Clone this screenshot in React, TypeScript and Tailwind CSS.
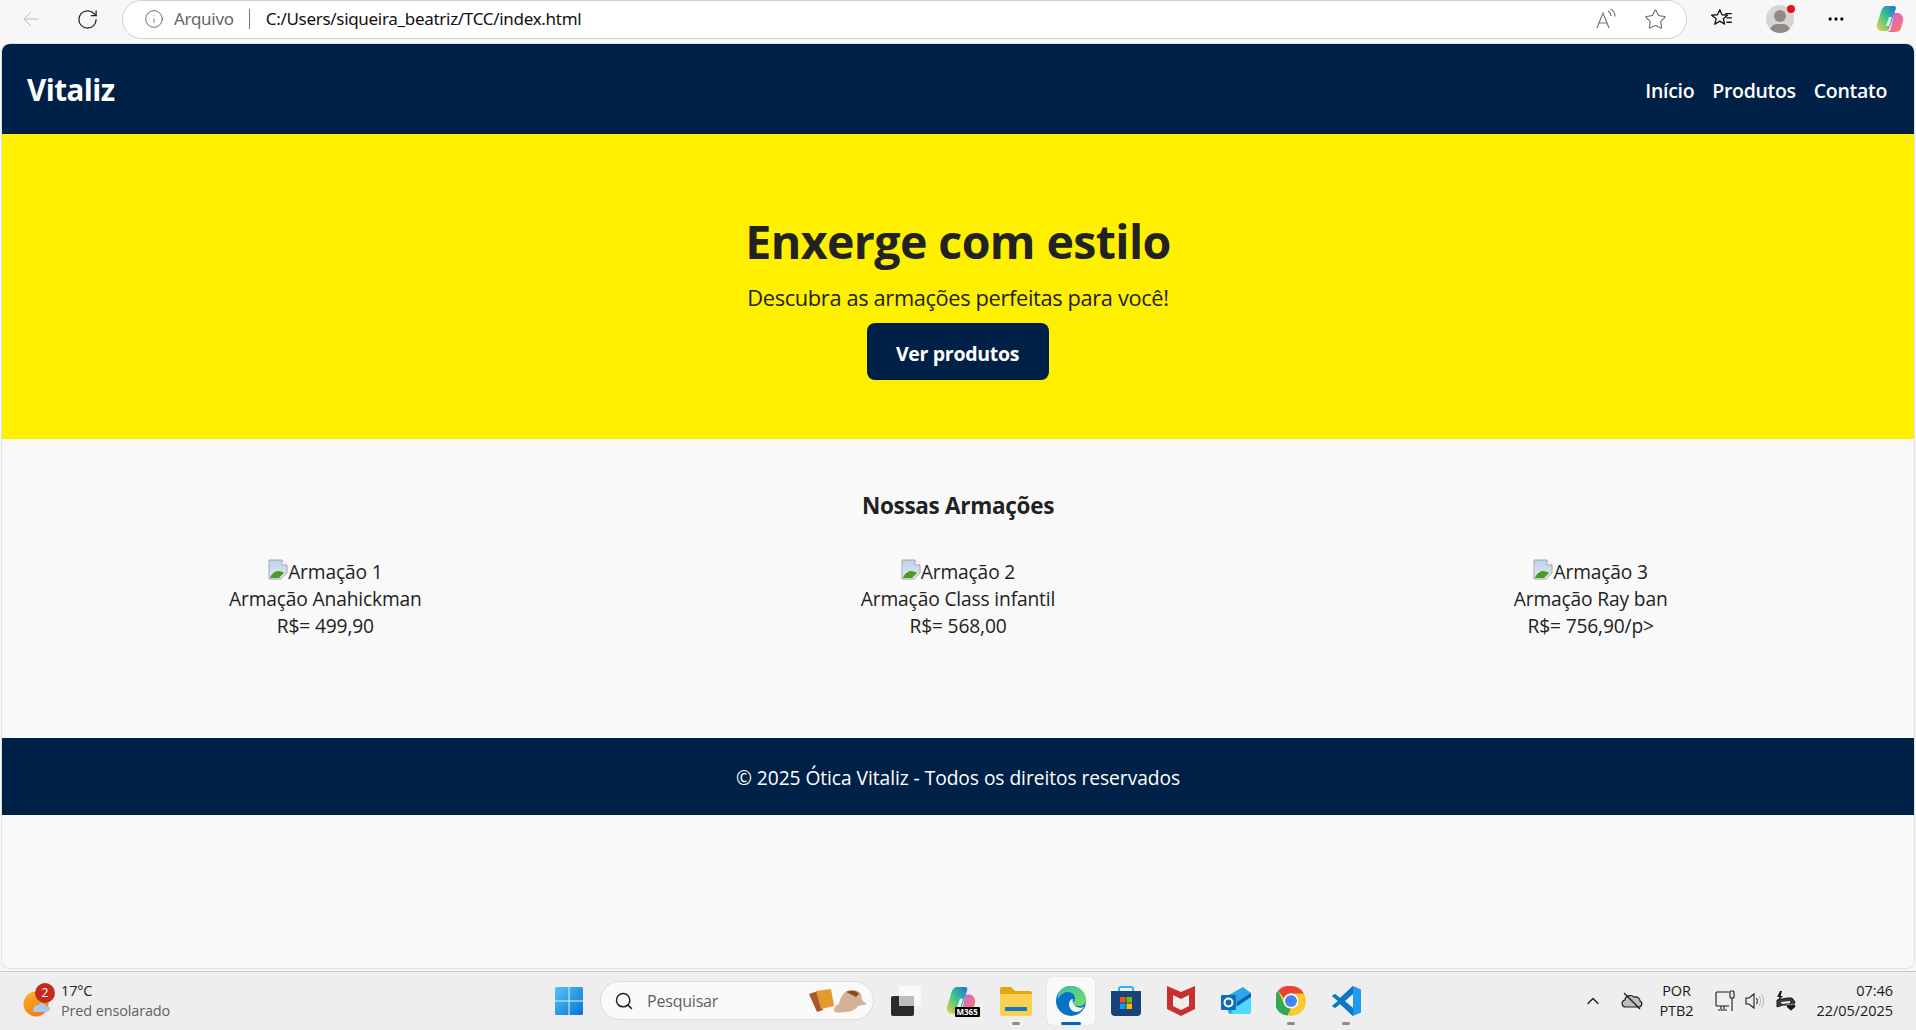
import React from 'react';
import { ArrowLeft, RotateCw, Info, Star, Search, ChevronUp, MoreHorizontal } from 'lucide-react';

const produtos = [
  { alt: 'Armação 1', nome: 'Armação Anahickman', preco: 'R$= 499,90' },
  { alt: 'Armação 2', nome: 'Armação Class infantil', preco: 'R$= 568,00' },
  { alt: 'Armação 3', nome: 'Armação Ray ban', preco: 'R$= 756,90/p>' },
];

const BrokenImage = () => (
  <svg width="20" height="21" viewBox="0 0 20 21" className="inline-block align-[-1px]">
    <defs>
      <linearGradient id="sky" x1="0" y1="0" x2="0" y2="1">
        <stop offset="0" stopColor="#bcd2ec" />
        <stop offset="1" stopColor="#e3ebf4" />
      </linearGradient>
    </defs>
    <path d="M1 1h13l5 5v8l-6 6H1z" fill="url(#sky)" stroke="#a6a6a6" />
    <path d="M14 1v5h5" fill="#fff" stroke="#a6a6a6" />
    <path d="M2 19c1-4 5-7 8-7s5 1 6 2l-5 5z" fill="#4f9a26" />
    <path d="M19.500 14l-6.500 6.500h2l4.500-4.500z" fill="#f9f9f9" />
  </svg>
);

const CopilotIcon = ({ size = 28 }: { size?: number }) => (
  <svg width={size} height={size} viewBox="0 0 28 28">
    <defs>
      <linearGradient id="cp1" x1="0" y1="1" x2="1" y2="0">
        <stop offset="0" stopColor="#f7d13c" />
        <stop offset="0.5" stopColor="#3fc48d" />
        <stop offset="1" stopColor="#1a6fe0" />
      </linearGradient>
      <linearGradient id="cp2" x1="0" y1="0" x2="1" y2="1">
        <stop offset="0" stopColor="#b070e8" />
        <stop offset="0.6" stopColor="#f06c9a" />
        <stop offset="1" stopColor="#f5853f" />
      </linearGradient>
    </defs>
    <path d="M10 1h8c1 0 2 1 2 2l-6 19c-1 3-3 4-5 4H6c-4 0-6-3-5-7l3-9C5 5 7 1 10 1z" fill="url(#cp1)" />
    <path d="M18 8h4c3 0 6 4 5 8l-2 7c-1 3-3 4-6 4h-9c2 0 4-1 5-4z" fill="url(#cp2)" />
    <path d="M13 12h3l-3 9h-3z" fill="#fff" opacity="0.85" />
  </svg>
);

const FavoritesIcon = () => (
  <svg width="24" height="24" viewBox="0 0 22 22" fill="none" stroke="#111" strokeWidth="1.2" strokeLinejoin="round">
    <path d="M9 2.500l2 4.600 5 .4-3.800 3.200 1.200 5-4.400-2.700-4.600 2.800 1.300-5.100L1.500 7.500l5.300-.4z" />
    <path d="M14 6h6M15 10h5M15 14h5" />
  </svg>
);

const ReadAloudIcon = () => (
  <svg width="22" height="22" viewBox="0 0 22 22" fill="none" stroke="#777" strokeWidth="1.200">
    <path d="M2 20L8 5l6 15M4 15h8" />
    <path d="M13 3c2 1 3 3 3 5M15.500 1c3 1.500 4.500 4 4.500 7.500" />
  </svg>
);

const WeatherIcon = () => (
  <div className="relative w-[30px] h-[34px] shrink-0">
    <svg width="30" height="34" viewBox="0 0 30 34">
      <defs>
        <linearGradient id="sun" x1="0" y1="0" x2="0.6" y2="1">
          <stop offset="0" stopColor="#f8b820" />
          <stop offset="1" stopColor="#f27a1a" />
        </linearGradient>
      </defs>
      <circle cx="13" cy="20" r="12.500" fill="url(#sun)" />
      <path d="M12 28c-2 0-3-3-1-4 0-2 2-3 4-3 2-3 7-2 8 1 3 0 5 2 4 4-1 1-2 2-4 2z" fill="#a9c9ee" />
    </svg>
    <span className="absolute left-[12px] top-[-1px] w-[20px] h-[20px] rounded-full bg-[#c42b1c] text-white text-[12px] leading-[20px] text-center">2</span>
  </div>
);

const WindowsIcon = () => (
  <svg width="30" height="30" viewBox="0 0 30 30">
    <defs>
      <linearGradient id="win" x1="0" y1="0" x2="1" y2="1">
        <stop offset="0" stopColor="#4fc8fb" />
        <stop offset="1" stopColor="#0672cf" />
      </linearGradient>
    </defs>
    <path d="M1 2.500A1.500 1.500 0 0 1 2.500 1h12v13.500H1zM15.500 1h12A1.500 1.500 0 0 1 29 2.500v12H15.500zM1 15.500h13.500V29h-12A1.500 1.500 0 0 1 1 27.500zM15.500 15.500H29v12a1.500 1.500 0 0 1-1.500 1.500h-12z" fill="url(#win)" />
  </svg>
);

const SearchDecor = () => (
  <svg width="60" height="28" viewBox="0 0 60 28">
    <path d="M1 7l9-3 5 19-6 2z" fill="#a9562a" />
    <path d="M8 4l15-2 3 17-13 3z" fill="#e29a2f" />
    <path d="M26 24c0-5 3-6 5-7 1-6 4-12 9-13 4-2 11-1 13 3l1 6 5 4-9 2c-3 5-9 6-14 6-4 1-9 1-10-1z" fill="#d3b299" />
    <path d="M38 5c4-2 11-2 13 2l-3 3c-3-2-6-3-10-5z" fill="#8a4b24" />
  </svg>
);

const TaskViewIcon = () => (
  <svg width="30" height="30" viewBox="0 0 30 30">
    <rect x="8" y="0" width="22" height="20" rx="2" fill="#fafafa" />
    <rect x="0" y="10" width="23" height="20" rx="2" fill="#2b2b2b" />
    <rect x="8" y="10" width="15" height="10" fill="#bdbdbd" />
  </svg>
);

const M365Icon = () => (
  <div className="relative w-[30px] h-[30px]">
    <CopilotIcon size={30} />
    <span className="absolute left-[9px] bottom-[-1px] bg-black text-white text-[8px] leading-[10px] px-[2px] font-bold rounded-[1px]">M365</span>
  </div>
);

const FolderIcon = () => (
  <svg width="34" height="30" viewBox="0 0 34 30">
    <path d="M1 3a2 2 0 0 1 2-2h9l4 4h15a2 2 0 0 1 2 2v4H1z" fill="#e2a410" />
    <path d="M1 8h32v20a2 2 0 0 1-2 2H3a2 2 0 0 1-2-2z" fill="#fbd04e" />
    <path d="M6 21h22v4H6z" fill="#1377c9" />
  </svg>
);

const EdgeIcon = () => (
  <svg width="30" height="30" viewBox="0 0 30 30">
    <defs>
      <linearGradient id="edge1" x1="0" y1="0" x2="1" y2="1">
        <stop offset="0" stopColor="#36c3b0" />
        <stop offset="1" stopColor="#7ddc5a" />
      </linearGradient>
    </defs>
    <circle cx="15" cy="15" r="15" fill="#0a72c6" />
    <path d="M2 9C5 3 10 0 15 0c9 0 15 7 15 14 0 4-3 6-7 6-3 0-6-1-6-3 0-1 2-2 2-5 0-3-3-6-7-6S5 8 2 13z" fill="url(#edge1)" />
    <path d="M13 18c0-3 2-5 4-5-1 2 0 6 4 8 2 1 5 1 7 0-2 3-5 5-8 5-4 0-7-4-7-8z" fill="#eef5fa" />
  </svg>
);

const StoreIcon = () => (
  <svg width="30" height="30" viewBox="0 0 30 30">
    <path d="M8 6V3a2 2 0 0 1 2-2h10a2 2 0 0 1 2 2v3" fill="none" stroke="#29b6f6" strokeWidth="2" />
    <path d="M0 5h30v21a4 4 0 0 1-4 4H4a4 4 0 0 1-4-4z" fill="#17427a" />
    <rect x="9" y="11" width="5.500" height="5.500" fill="#f25022" />
    <rect x="15.500" y="11" width="5.500" height="5.500" fill="#7fba00" />
    <rect x="9" y="17.500" width="5.500" height="5.500" fill="#00a4ef" />
    <rect x="15.500" y="17.500" width="5.500" height="5.500" fill="#ffb900" />
  </svg>
);

const McAfeeIcon = () => (
  <svg width="28" height="30" viewBox="0 0 28 30">
    <path d="M0 0l14 6 14-6v23l-14 7-14-7zM6 9v11l8 4 8-4V9l-8 4z" fill="#c8302f" fillRule="evenodd" />
  </svg>
);

const OutlookIcon = () => (
  <svg width="30" height="28" viewBox="0 0 30 28">
    <path d="M6 9L22 0l8 6v18a3 3 0 0 1-3 3H10a3 3 0 0 1-3-3z" fill="#28a8ea" />
    <path d="M16 15L30 6v8l-14 7z" fill="#0a5fb4" />
    <path d="M12 22l18-12v14a3 3 0 0 1-3 3H10z" fill="#50d9ff" />
    <rect x="0" y="8" width="15" height="15" rx="1" fill="#0f6cbd" />
    <circle cx="7.500" cy="15.500" r="4" fill="none" stroke="#fff" strokeWidth="2" />
  </svg>
);

const ChromeIcon = () => (
  <svg width="30" height="30" viewBox="0 0 30 30">
    <circle cx="15" cy="15" r="15" fill="#fcc934" />
    <path d="M15 0a15 15 0 0 1 13 7.500H15a7.500 7.500 0 0 0-7 4.800L2 4.800A15 15 0 0 1 15 0z" fill="#ea4335" />
    <path d="M2 4.800l6.500 14A7.500 7.500 0 0 0 15 22.500L11.500 29.600A15 15 0 0 1 2 4.800z" fill="#34a853" />
    <circle cx="15" cy="15" r="7.500" fill="#fff" />
    <circle cx="15" cy="15" r="6" fill="#4285f4" />
  </svg>
);

const VSCodeIcon = () => (
  <svg width="30" height="30" viewBox="0 0 30 30">
    <path d="M22 0l8 3.500v23L22 30 9 18l-5 4-3-2 6-5-6-5 3-2 5 4z" fill="#1f9cf0" />
    <path d="M22 0v30L9 18l-5 4-3-2 6-5-6-5 3-2 5 4z" fill="#0b78c4" />
    <path d="M22 8l-8 7 8 7z" fill="#eeeeee" />
  </svg>
);

const TrayCloud = () => (
  <svg width="22" height="18" viewBox="0 0 22 18" fill="#bdbdbd" stroke="#1b1b1b" strokeWidth="1.200">
    <path d="M5 15c-5 0-5-6-1-7 0-4 6-6 9-3 4-1 6 2 6 4 3 1 2 6-1 6z" />
    <path d="M3 1l16 16" />
  </svg>
);

const TrayMonitor = () => (
  <svg width="20" height="22" viewBox="0 0 20 22" fill="none" stroke="#1b1b1b" strokeWidth="1.100">
    <path d="M14 2H2a1 1 0 0 0-1 1v12a1 1 0 0 0 1 1h12M6 16v3M3 20h9M9 16v3" />
    <rect x="15" y="1" width="4" height="7" rx="1" />
    <path d="M17 8v13" />
  </svg>
);

const TraySpeaker = () => (
  <svg width="20" height="18" viewBox="0 0 20 18" fill="none" stroke="#1b1b1b" strokeWidth="1.100">
    <path d="M1 6h3l5-4v14l-5-4H1z" />
    <path d="M11.500 6c1 1.500 1 4.500 0 6" />
    <path d="M14 4c2 3 2 7 0 10M16.500 2c3 4 3 10 0 14" stroke="#bbbbbb" />
  </svg>
);

const TrayBattery = () => (
  <svg width="22" height="20" viewBox="0 0 22 20" fill="#1b1b1b">
    <path d="M5 0L2 6h2.500L3 10l5-5H5.500L7 0z" />
    <path d="M2 9l10-2h5l3 4-1 3H8l-6 2z" fill="#3a3a3a" stroke="#1b1b1b" strokeWidth="1" />
    <path d="M6 11l9-1v2l-8 1z" fill="#eeeeee" />
    <path d="M16 20l-4.500-4c-1-2 1.500-4 4.500-2 3-2 5.500 0 4.500 2z" stroke="#eeeeee" strokeWidth="0.600" />
  </svg>
);

const TaskbarIcon = ({ children, dot, active }: { children: React.ReactNode; dot?: boolean; active?: boolean }) => (
  <div className="relative w-[55px] h-[48px] flex items-center justify-center">
    {active && <div className="absolute left-[4px] top-0 w-[48px] h-[48px] rounded-[5px] bg-[#f9f9f9] shadow-[0_0_1px_rgba(0,0,0,0.25)]" />}
    <div className="relative">{children}</div>
    {dot && <span className="absolute left-1/2 -translate-x-1/2 bottom-0 w-[8px] h-[3px] rounded-full bg-[#8a8a8a]" />}
    {active && <span className="absolute left-1/2 -translate-x-1/2 bottom-0 w-[20px] h-[3px] rounded-full bg-[#0067c0]" />}
  </div>
);

export default function App() {
  return (
    <div className="relative w-[1916px] h-[1030px] overflow-hidden flex flex-col bg-[#f7f7f7] font-['Noto_Sans','Open_Sans',sans-serif]">
      {/* Barra do navegador */}
      <div className="h-[44px] shrink-0 flex items-center pb-[6px] text-[#1b1b1b]">
        <div className="w-[122px] flex items-center shrink-0 pl-[19px] gap-[33px]">
          <ArrowLeft size={24} strokeWidth={1} className="text-[#bdbdbd]" />
          <RotateCw size={23} strokeWidth={1.300} className="text-[#222]" />
        </div>
        <div className="w-[1565px] h-[39px] flex items-center rounded-full bg-white border border-[#d0d0d0] pl-[21px] pr-[19px] shrink-0">
          <Info size={20} strokeWidth={1} className="text-[#555] shrink-0" />
          <span className="ml-[10px] text-[17px] text-[#666] tracking-[-0.3px]">Arquivo</span>
          <span className="ml-[15px] w-px h-[20px] bg-[#777]" />
          <span className="ml-[16px] text-[17px] text-[#111] tracking-[-0.3px]">C:/Users/siqueira_beatriz/TCC/index.html</span>
          <div className="ml-auto flex items-center gap-[27px]">
            <ReadAloudIcon />
            <Star size={23} strokeWidth={1.100} className="text-[#666]" />
          </div>
        </div>
        <div className="flex-1 flex items-center pl-[23px] pr-[12px] justify-between">
          <FavoritesIcon />
          <div className="relative w-[28px] h-[28px] rounded-full bg-[#d8d6d4] overflow-hidden ml-[2px]">
            <div className="absolute left-[8px] top-[5px] w-[12px] h-[12px] rounded-full bg-[#8f8b88]" />
            <div className="absolute left-[4px] top-[19px] w-[20px] h-[14px] rounded-full bg-[#8f8b88]" />
          </div>
          <MoreHorizontal size={20} className="text-[#111] ml-[3px]" />
          <CopilotIcon />
        </div>
      </div>
      <div className="absolute left-[1787px] top-[5px] w-[8px] h-[8px] rounded-full bg-[#e81123]" />

      {/* Página */}
      <div className="mx-[2px] h-[924px] shrink-0 rounded-[8px] overflow-hidden bg-[#f9f9f9] text-[#222] text-[19.200px] leading-[27px] flex flex-col shadow-[0_0_0_1px_#e2e2e2] font-['Open_Sans','Noto_Sans',sans-serif]">
        <header className="h-[90px] shrink-0 bg-[#002147] flex items-center justify-between pl-[25px] pr-[27px] text-white">
          <h1 className="text-[29.500px] font-bold tracking-[-0.5px]">Vitaliz</h1>
          <nav className="flex gap-[18px] pt-[3px] text-[19.500px] font-semibold tracking-[-0.3px]">
            <a>Início</a>
            <a>Produtos</a>
            <a>Contato</a>
          </nav>
        </header>

        <section className="h-[305px] shrink-0 bg-[#fff000] flex flex-col items-center pt-[82px]">
          <h2 className="text-[46.500px] leading-[50px] font-bold tracking-[-0.6px]">Enxerge com estilo</h2>
          <p className="mt-[17px] text-[21.800px] leading-[30px] tracking-[-0.35px]">Descubra as armações perfeitas para você!</p>
          <button className="mt-[10px] -ml-[1px] w-[182px] h-[57px] pt-[3px] rounded-[8px] bg-[#002147] text-white text-[19.500px] font-bold tracking-[-0.3px]">Ver produtos</button>
        </section>

        <section className="h-[299px] shrink-0 pt-[52px]">
          <h3 className="text-center text-[22.500px] leading-[30px] font-bold tracking-[-0.3px]">Nossas Armações</h3>
          <div className="grid grid-cols-3 px-[7px] mt-[37px]">
            {produtos.map((p) => (
              <div key={p.alt} className="text-center tracking-[-0.15px]">
                <div><BrokenImage />{p.alt}</div>
                <p>{p.nome}</p>
                <p>{p.preco}</p>
              </div>
            ))}
          </div>
        </section>

        <footer className="h-[77px] shrink-0 pt-[2px] bg-[#002147] text-white flex items-center justify-center tracking-[-0.05px]">
          © 2025 Ótica Vitaliz - Todos os direitos reservados
        </footer>
      </div>

      {/* Barra de tarefas */}
      <div className="mt-[3px] flex-1 bg-[#eeeeee] border-t border-[#c8c8c8] relative flex items-center pb-[1px] font-['Open_Sans','Noto_Sans',sans-serif]">
        <div className="flex items-center pl-[23px] gap-[8px] w-[539px] shrink-0">
          <WeatherIcon />
          <div className="text-[14.500px] leading-[20px] tracking-[-0.15px]">
            <div className="text-[#222]">17°C</div>
            <div className="text-[#5f5f5f]">Pred ensolarado</div>
          </div>
        </div>
        <div className="flex items-center ml-[15px]">
          <WindowsIcon />
          <div className="ml-[16px] w-[274px] h-[39px] rounded-full bg-[#fafafa] border border-[#dcdcdc] flex items-center pl-[13px] pr-[5px]">
            <Search size={20} strokeWidth={1.800} className="text-[#222]" />
            <span className="ml-[13px] text-[16px] text-[#5f5f5f] tracking-[-0.2px]">Pesquisar</span>
            <div className="ml-auto"><SearchDecor /></div>
          </div>
          <div className="ml-[4px] flex items-center">
            <TaskbarIcon><TaskViewIcon /></TaskbarIcon>
            <TaskbarIcon><M365Icon /></TaskbarIcon>
            <TaskbarIcon dot><FolderIcon /></TaskbarIcon>
            <TaskbarIcon active><EdgeIcon /></TaskbarIcon>
            <TaskbarIcon><StoreIcon /></TaskbarIcon>
            <TaskbarIcon><McAfeeIcon /></TaskbarIcon>
            <TaskbarIcon><OutlookIcon /></TaskbarIcon>
            <TaskbarIcon dot><ChromeIcon /></TaskbarIcon>
            <TaskbarIcon dot><VSCodeIcon /></TaskbarIcon>
          </div>
        </div>
        <div className="ml-auto flex items-center pr-[23px] text-[#1b1b1b] text-[14.500px] leading-[20px] tracking-[-0.05px]">
          <ChevronUp size={20} strokeWidth={1.500} />
          <div className="ml-[18px]"><TrayCloud /></div>
          <div className="ml-[16px] w-[36px] text-center"><div>POR</div><div>PTB2</div></div>
          <div className="ml-[20px]"><TrayMonitor /></div>
          <div className="ml-[10px]"><TraySpeaker /></div>
          <div className="ml-[10px]"><TrayBattery /></div>
          <div className="ml-[20px] text-right"><div>07:46</div><div>22/05/2025</div></div>
        </div>
      </div>
    </div>
  );
}
